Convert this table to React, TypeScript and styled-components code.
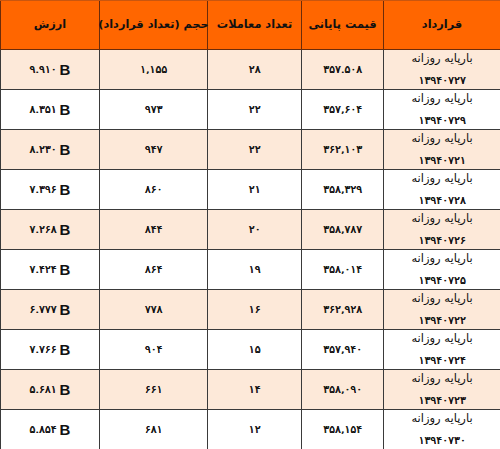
import React from "react";
import styled, { createGlobalStyle } from "styled-components";

const Global = createGlobalStyle`
  html, body { margin: 0; padding: 0; background: #ffffff; }
  body { font-family: "DejaVu Sans", "Noto Sans", sans-serif; }
`;

const COLS = "117px 82px 94px 108px 99px";

const Table = styled.div`
  width: 500px;
  direction: rtl;
  overflow: hidden;
`;

const HeaderRow = styled.div`
  display: grid;
  grid-template-columns: ${COLS};
  height: 50px;
  background: #ff6600;
  border-bottom: 1px solid #6b2c0a;
  border-top: 1px solid #c9560f;
  box-sizing: border-box;
`;

const HeadCell = styled.div`
  display: flex;
  align-items: center;
  justify-content: center;
  border-left: 1px solid #6b2c0a;
  font-weight: bold;
  font-size: 11.3px;
  color: #111;
  white-space: nowrap;
  padding-bottom: 1px;
`;

const Row = styled.div<{ $alt: boolean }>`
  display: grid;
  grid-template-columns: ${COLS};
  height: 40px;
  box-sizing: border-box;
  border-bottom: 1px solid #3a3a3a;
  background: ${(p) => (p.$alt ? "#fde9d9" : "#ffffff")};
`;

const Cell = styled.div`
  display: flex;
  align-items: center;
  justify-content: center;
  border-left: 1px solid #3a3a3a;
  font-size: 11px;
  letter-spacing: 0.3px;
  text-shadow: 0.4px 0 0 #111;
  color: #111;
  white-space: nowrap;
`;

const ContractCell = styled.div`
  display: flex;
  flex-direction: column;
  align-items: center;
  border-left: 1px solid #3a3a3a;
  font-size: 11.5px;
  color: #111;
  white-space: nowrap;
`;

const ContractName = styled.span`
  display: block;
  line-height: 16px;
  letter-spacing: 0.8px;
`;

const ContractCode = styled.span`
  display: block;
  margin-top: 7px;
  line-height: 16px;
  font-size: 11px;
  letter-spacing: 0.6px;
  text-shadow: 0.4px 0 0 #111;
`;

const Value = styled.div`
  direction: ltr;
  display: flex;
  align-items: center;
  gap: 3px;
`;

const Unit = styled.span`
  font-family: "Liberation Sans", Arial, sans-serif;
  font-weight: bold;
  font-size: 15px;
  text-shadow: none;
`;

type R = [string, string, string, string, string];

const rows: R[] = [
  ["۱۳۹۴۰۷۲۷", "۳۵۷.۵۰۸", "۲۸", "۱,۱۵۵", "۹.۹۱۰"],
  ["۱۳۹۴۰۷۲۹", "۳۵۷,۶۰۴", "۲۲", "۹۷۳", "۸.۳۵۱"],
  ["۱۳۹۴۰۷۲۱", "۳۶۲,۱۰۳", "۲۲", "۹۴۷", "۸.۲۳۰"],
  ["۱۳۹۴۰۷۲۸", "۳۵۸,۳۲۹", "۲۱", "۸۶۰", "۷.۳۹۶"],
  ["۱۳۹۴۰۷۲۶", "۳۵۸,۷۸۷", "۲۰", "۸۴۴", "۷.۲۶۸"],
  ["۱۳۹۴۰۷۲۵", "۳۵۸,۰۱۴", "۱۹", "۸۶۴", "۷.۴۲۴"],
  ["۱۳۹۴۰۷۲۲", "۳۶۲,۹۲۸", "۱۶", "۷۷۸", "۶.۷۷۷"],
  ["۱۳۹۴۰۷۲۴", "۳۵۷,۹۴۰", "۱۵", "۹۰۴", "۷.۷۶۶"],
  ["۱۳۹۴۰۷۲۳", "۳۵۸,۰۹۰", "۱۴", "۶۶۱", "۵.۶۸۱"],
  ["۱۳۹۴۰۷۳۰", "۳۵۸,۱۵۴", "۱۲", "۶۸۱", "۵.۸۵۴"],
];

export default function App() {
  return (
    <>
      <Global />
      <Table>
        <HeaderRow>
          <HeadCell>قرارداد</HeadCell>
          <HeadCell>قیمت پایانی</HeadCell>
          <HeadCell>تعداد معاملات</HeadCell>
          <HeadCell>حجم (تعداد قرارداد)</HeadCell>
          <HeadCell>ارزش</HeadCell>
        </HeaderRow>
        {rows.map((r, i) => (
          <Row key={i} $alt={i % 2 === 0}>
            <ContractCell>
              <ContractName>بارپایه روزانه</ContractName>
              <ContractCode>{r[0]}</ContractCode>
            </ContractCell>
            <Cell>{r[1]}</Cell>
            <Cell>{r[2]}</Cell>
            <Cell>{r[3]}</Cell>
            <Cell>
              <Value>
                <span>{r[4]}</span>
                <Unit>B</Unit>
              </Value>
            </Cell>
          </Row>
        ))}
      </Table>
    </>
  );
}
